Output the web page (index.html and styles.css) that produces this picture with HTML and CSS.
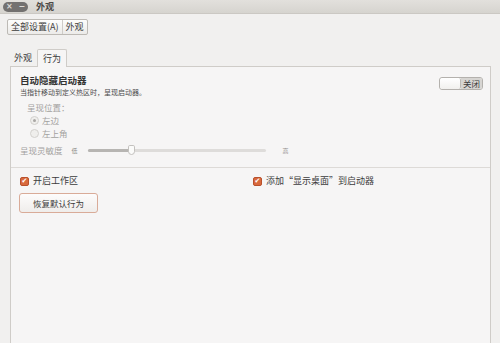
FILE: index.html
```html
<!DOCTYPE html>
<html>
<head>
<meta charset="utf-8">
<title>外观</title>
<link rel="stylesheet" href="styles.css">
</head>
<body>
<div class="titlebar">
<div class="wbtns"><span>×</span><span>−</span></div>
<span class="wtitle">外观</span>
</div>
<div class="toolbar">
<div class="crumbs">
<button class="crumb">全部设置(A)</button>
<button class="crumb">外观</button>
</div>
</div>
<div class="tabs">
<span class="tab">外观</span>
<span class="tab active">行为</span>
</div>
<div class="panel">
<div class="section">
<div class="head">
<div>
<div class="htitle">自动隐藏启动器</div>
<div class="desc">当指针移动到定义热区时，呈现启动器。</div>
</div>
<div class="switch"><span class="knob"></span><span class="state">关闭</span></div>
</div>
<div class="position">
<div class="row">呈现位置：</div>
<div class="row radio-row"><span class="radio on"></span>左边</div>
<div class="row radio-row"><span class="radio"></span>左上角</div>
</div>
<div class="sens">
<span class="slabel">呈现灵敏度</span>
<span class="tiny">低</span>
<div class="slider"><span class="fill"></span><span class="thumb"></span></div>
<span class="tiny">高</span>
</div>
</div>
<div class="section2">
<div class="checks">
<label class="check"><span class="box">✔</span>开启工作区</label>
<label class="check"><span class="box">✔</span>添加“显示桌面”到启动器</label>
</div>
<button class="reset">恢复默认行为</button>
</div>
</div>
</body>
</html>
```
FILE: styles.css
```css
*{
margin: 0;
padding: 0;
box-sizing: border-box;
}
html,body{
height: 100%;
}
body{
background: #f1f0ef;
font-family: "Noto Sans CJK SC", "Noto Sans", sans-serif;
font-size: 9px;
color: #3c3c3c;
display: flex;
flex-direction: column;
overflow: hidden;
}
.titlebar{
height: 14px;
display: flex;
align-items: center;
padding-left: 3px;
background: linear-gradient(#e2e0dc, #d6d4cf);
border-bottom: 1px solid #cbc8c3;
}
.wbtns{
width: 25px;
height: 10px;
border-radius: 5px;
background: #737170;
display: flex;
justify-content: space-around;
align-items: center;
color: #dcdad6;
font-size: 8px;
line-height: 10px;
font-family: "DejaVu Sans", sans-serif;
font-weight: bold;
}
.wtitle{
margin-left: 8px;
font-weight: bold;
font-size: 9px;
color: #4a4845;
}
.toolbar{
padding: 5px 7px 0;
}
.crumbs{
display: inline-flex;
border: 1px solid #bdbab5;
border-radius: 2px;
background: linear-gradient(#fdfdfc, #ecebe9);
height: 16px;
}
.crumb{
border: none;
background: none;
font-family: inherit;
font-size: 9px;
color: #3c3c3c;
padding: 0 3px;
line-height: 14px;
}
.crumb + .crumb{
border-left: 1px solid #cfccc8;
}
.tabs{
margin-top: 14px;
padding-left: 11px;
display: flex;
align-items: flex-end;
height: 17px;
}
.tab{
padding: 0 3px;
line-height: 16px;
height: 16px;
}
.tab.active{
margin-left: 2px;
height: 18px;
line-height: 17px;
padding: 0 5px;
border: 1px solid #cfccc8;
border-bottom: none;
border-radius: 2px 2px 0 0;
background: #f6f5f5;
margin-bottom: -1px;
position: relative;
}
.panel{
flex: 1;
margin: 0 9px 0 10px;
border: 1px solid #cfccc8;
border-bottom: none;
background: #f6f5f5;
}
.section{
padding: 7px 7px 10px 9px;
border-bottom: 1px solid #dddad7;
}
.head{
display: flex;
justify-content: space-between;
align-items: flex-start;
}
.htitle{
font-weight: bold;
font-size: 9.5px;
line-height: 12px;
color: #333;
}
.desc{
font-size: 7px;
line-height: 10px;
margin-top: 1px;
color: #4a4a4a;
}
.switch{
margin-top: 3px;
width: 44px;
height: 13px;
border: 1px solid #b4b1ad;
border-radius: 3px;
display: flex;
overflow: hidden;
}
.knob{
width: 21px;
background: linear-gradient(#ffffff, #f1f0ee);
border-right: 1px solid #bdbab6;
border-radius: 2px;
}
.state{
flex: 1;
background: #d7d5d2;
text-align: center;
line-height: 11px;
font-size: 8.5px;
color: #3c3c3c;
}
.position{
padding-left: 7px;
margin-top: 4px;
color: #a3a19e;
}
.row{
height: 13px;
line-height: 13px;
font-size: 8.5px;
}
.radio-row{
display: flex;
align-items: center;
padding-left: 3px;
}
.radio{
width: 9px;
height: 9px;
border-radius: 50%;
border: 1px solid #d3d1ce;
background: #efeeec;
margin-right: 3px;
position: relative;
}
.radio.on::after{
content: '';
position: absolute;
width: 3px;
height: 3px;
border-radius: 50%;
background: #a9a7a4;
left: 2px;
top: 2px;
}
.sens{
margin-top: 3px;
height: 14px;
display: flex;
align-items: center;
color: #a3a19e;
font-size: 8.5px;
}
.tiny{
font-size: 6px;
margin-left: 9px;
color: #8f8d8a;
}
.slider{
width: 178px;
height: 3px;
margin: 0 8px 0 10px;
background: #dedcda;
border-radius: 2px;
position: relative;
}
.fill{
display: block;
width: 43px;
height: 3px;
background: #b7b5b2;
border-radius: 2px;
}
.thumb{
position: absolute;
left: 40px;
top: -4px;
width: 7px;
height: 10px;
border: 1px solid #c3c1be;
border-radius: 2px 2px 4px 4px;
background: #fbfbfa;
}
.section2{
padding: 7px 8px 0 8px;
}
.checks{
display: grid;
grid-template-columns: 233px 1fr;
}
.check{
display: flex;
align-items: center;
height: 12px;
line-height: 12px;
padding-left: 1px;
font-size: 9px;
}
.box{
width: 9px;
height: 9px;
border-radius: 2px;
background: #d8693d;
border: 1px solid #b9502b;
color: #fff;
font-size: 7px;
line-height: 7px;
text-align: center;
margin-right: 4px;
font-family: "DejaVu Sans", sans-serif;
}
.reset{
margin-top: 6px;
width: 79px;
height: 20px;
border: 1px solid #d9ab98;
border-radius: 3px;
background: linear-gradient(#fdfcfc, #efedeb);
font-family: inherit;
font-size: 8.5px;
color: #3c3c3c;
}
```
